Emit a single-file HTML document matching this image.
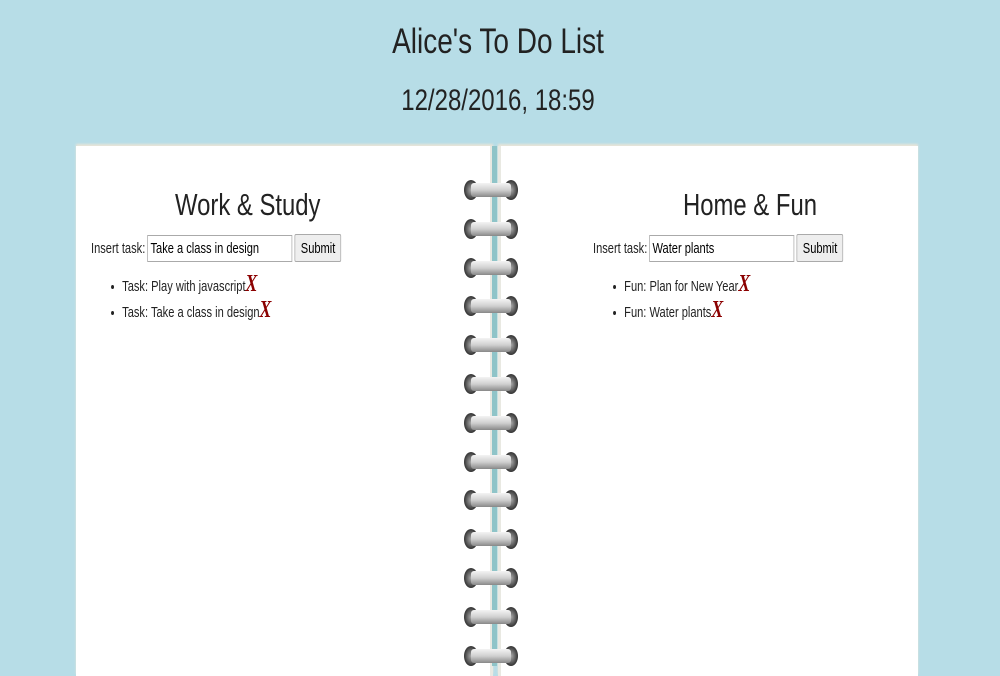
<!DOCTYPE html>
<html><head><style>
body{margin:0;width:1000px;height:662px;background:#b7dde7;font-family:"Liberation Sans",sans-serif;color:#222;overflow:hidden;position:relative}
.t{position:absolute;left:0;width:996px;text-align:center;transform:scaleX(0.8);transform-origin:498px 0;margin:0;font-weight:normal}
h1.t{top:22px;font-size:35px}
.date{top:84px;font-size:30px}
.page{position:absolute;top:146px;height:530px;background:#fff;box-shadow:0 -2px 2px #e8e4d8}
.l{left:76px;width:414px;border-right:3px solid #e9e9e2}
.r{left:498px;width:417px;border-left:3px solid #e9e9e2}
.spine{position:absolute;left:492px;top:146px;width:5px;height:520px;background:#8fc4c8}
h2{position:absolute;top:187px;margin:0;font-weight:normal;font-size:31px;transform:scaleX(0.77);transform-origin:0 0}
.row{position:absolute;top:234px;font-size:15px;display:flex;align-items:center;transform:scaleX(0.74);transform-origin:0 0}
.row input{width:188px;height:25px;border:1px solid #aaa;font:15px "Liberation Sans",sans-serif;padding:0 3px;margin-left:3px}
.row button{width:63px;height:28px;margin-left:3px;border:1px solid #aaa;background:#eee;border-radius:2px;font:15px "Liberation Sans",sans-serif;padding:0}
ul{position:absolute;top:274px;margin:0;padding-left:34px;font-size:15px;transform:scaleX(0.74);transform-origin:0 0}
li{height:26px;line-height:26px}
.x{color:#8b0000;font-weight:bold;font-size:24px;font-family:"Liberation Serif",serif;font-style:italic;line-height:10px}
.ring{position:absolute;left:463px;width:56px;height:22px}
</style></head><body>
<h1 class="t">Alice's To Do List</h1>
<div class="t date">12/28/2016, 18:59</div>
<div class="page l"></div><div class="page r"></div>
<div class="spine"></div>
<h2 style="left:175px">Work &amp; Study</h2>
<div class="row" style="left:91px">Insert task:<input value="Take a class in design"><button>Submit</button></div>
<ul style="left:97px"><li>Task: Play with javascript<span class="x">X</span></li><li>Task: Take a class in design<span class="x">X</span></li></ul>
<h2 style="left:683px">Home &amp; Fun</h2>
<div class="row" style="left:593px">Insert task:<input value="Water plants"><button>Submit</button></div>
<ul style="left:599px"><li>Fun: Plan for New Year<span class="x">X</span></li><li>Fun: Water plants<span class="x">X</span></li></ul>
<svg width="0" height="0" style="position:absolute"><defs>
<linearGradient id="g" x1="0" y1="0" x2="0" y2="1"><stop offset="0" stop-color="#f4f4f4"/><stop offset=".5" stop-color="#d0d0d0"/><stop offset="1" stop-color="#888"/></linearGradient>
<radialGradient id="h"><stop offset="0" stop-color="#aaa"/><stop offset="1" stop-color="#333"/></radialGradient></defs></svg>
<div id="rings"></div>
<script>
var s='';for(var i=0;i<13;i++){var y=179+i*38.8;s+='<svg class="ring" style="top:'+y+'px" viewBox="0 0 56 22"><ellipse cx="8" cy="11" rx="7" ry="10" fill="url(#h)"/><ellipse cx="48" cy="11" rx="7" ry="10" fill="url(#h)"/><rect x="8" y="4" width="40" height="14" rx="3" fill="url(#g)"/></svg>';}
document.getElementById('rings').innerHTML=s;
</script>
</body></html>
